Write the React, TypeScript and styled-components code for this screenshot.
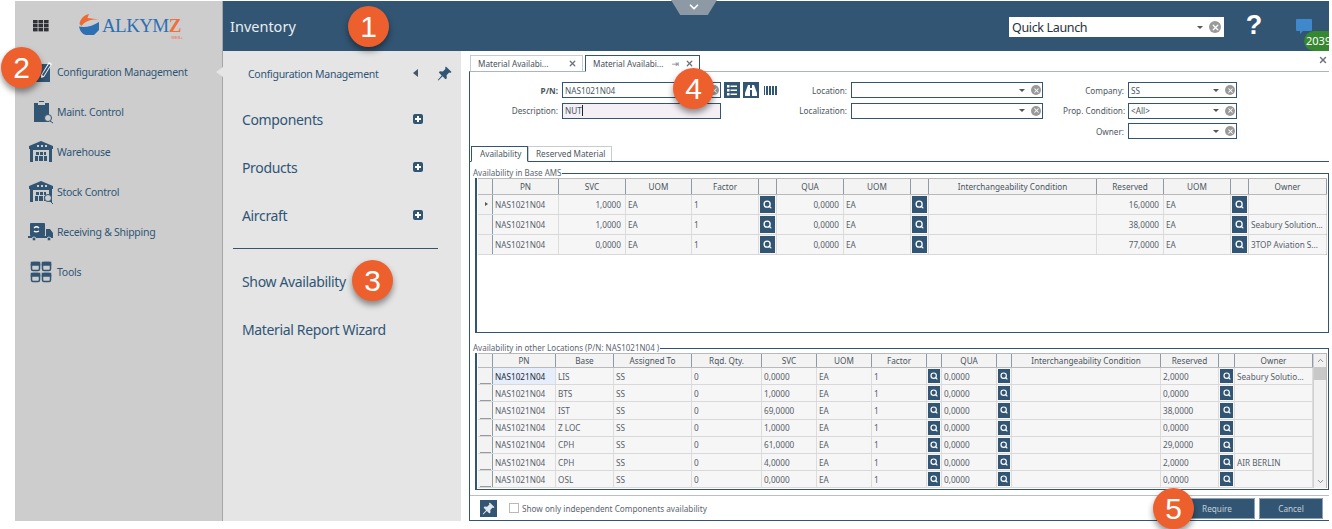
import React from "react";
import styled, { createGlobalStyle } from "styled-components";
import { ChevronDown, ChevronUp, Search, X } from "lucide-react";

const NAVY = "#325573";
const TEXT = "#2f5576";
const FONT = '"Noto Sans", "DejaVu Sans", sans-serif';

const GlobalStyle = createGlobalStyle`
  html, body { margin: 0; padding: 0; background: #fff; }
  body { font-family: ${FONT}; overflow: hidden; }
  * { box-sizing: border-box; }
`;

const Page = styled.div`
  position: relative;
  width: 1332px;
  height: 529px;
  padding: 1px 3px 8px 15px;
  overflow: hidden;
`;

const Shell = styled.div`
  display: flex;
  width: 100%;
  height: 100%;
`;

/* left rail */
const Rail = styled.aside`
  position: relative;
  width: 208px;
  flex: none;
  background: #cdcdcd;
  border-right: 1px solid #a5a5a5;
`;

const RailTop = styled.div`
  display: flex;
  align-items: center;
  height: 50px;
  padding-left: 18px;
  gap: 30px;
`;

const RailList = styled.nav`
  display: flex;
  flex-direction: column;
  padding-top: 1px;
`;

const RailRow = styled.div`
  position: relative;
  display: flex;
  align-items: center;
  height: 40px;
  padding-left: 13px;
  font-size: 10.5px;
  letter-spacing: -0.27px;
  color: ${TEXT};
  svg { width: 26px; height: 24px; flex: none; margin-right: 3px; }
`;

const RailPointer = styled.span`
  position: absolute;
  right: -1px;
  top: 15px;
  width: 7px;
  height: 10px;
  background: #e5e5e5;
  clip-path: polygon(100% 0, 0 50%, 100% 100%);
`;

/* header */
const Column = styled.div`
  flex: 1;
  display: flex;
  flex-direction: column;
  min-width: 0;
`;

const Header = styled.header`
  display: flex;
  align-items: center;
  height: 50px;
  flex: none;
  background: ${NAVY};
  padding-left: 7px;
  color: #fff;
  position: relative;
`;

const HeaderTitle = styled.div`
  font-size: 14.5px;
  color: #e8edf2;
  flex: 1;
  margin-top: -1px;
`;

const QuickLaunch = styled.div`
  display: flex;
  align-items: center;
  width: 215px;
  height: 20px;
  background: #fff;
  color: #26323d;
  font-size: 12.5px;
  letter-spacing: -0.35px;
  padding: 0 3px;
  margin-top: 2px;
  span { flex: 1; }
`;

const Help = styled.div`
  width: 60px;
  margin-left: 0;
  text-align: center;
  font-family: "Liberation Sans", sans-serif;
  font-weight: 700;
  font-size: 27px;
  line-height: 1;
  margin-top: -2px;
`;

const Chat = styled.div`
  position: relative;
  width: 45px;
  height: 50px;
  svg { position: absolute; left: 12px; top: 18px; }
`;

const ChatCount = styled.span`
  position: absolute;
  left: 20px;
  top: 30px;
  width: 25px;
  height: 20px;
  border-radius: 10px 0 0 10px;
  background: #35882f;
  color: #fff;
  font-size: 11px;
  line-height: 20px;
  padding-left: 2px;
  overflow: hidden;
`;

const PullTab = styled.div`
  position: absolute;
  left: 448px;
  top: -1px;
  width: 46px;
  height: 15px;
  background: #8d9aa6;
  clip-path: polygon(0 0, 100% 0, 80% 100%, 20% 100%);
  display: flex;
  justify-content: center;
  color: #fff;
`;

/* second level menu */
const Body = styled.div`
  flex: 1;
  display: flex;
  min-height: 0;
`;

const SubMenu = styled.div`
  width: 238px;
  flex: none;
  background: #e5e5e5;
  color: ${TEXT};
  padding: 0 23px 0 19px;
`;

const SubTitle = styled.div`
  display: flex;
  align-items: center;
  height: 45px;
  margin: 0 -14px -1px 0;
  padding-left: 6px;
  font-size: 10.5px;
  letter-spacing: -0.27px;
  span { flex: 1; }
`;

const Arrow = styled.i`
  width: 0;
  height: 0;
  border-top: 4px solid transparent;
  border-bottom: 4px solid transparent;
  border-right: 5px solid #45586a;
  margin-right: 19px;
  margin-top: -2px;
`;

const SubItem = styled.div`
  display: flex;
  align-items: center;
  justify-content: space-between;
  height: 48px;
  font-size: 14px;
  letter-spacing: -0.35px;
  padding-right: 15px;
  white-space: nowrap;
`;

const PlusBox = styled.span`
  width: 10px;
  height: 10px;
  border-radius: 2px;
  background: ${NAVY};
  position: relative;
  &::before, &::after {
    content: "";
    position: absolute;
    background: #fff;
  }
  &::before { left: 2px; right: 2px; top: 4px; height: 2px; }
  &::after { top: 2px; bottom: 2px; left: 4px; width: 2px; }
`;

const SubDivider = styled.div`
  border-top: 1px solid ${NAVY};
  margin: 9px 0 8px -9px;
`;

/* document area */
const Content = styled.main`
  flex: 1;
  min-width: 0;
  display: flex;
  flex-direction: column;
  background: #fff;
  padding: 4px 0 0 8px;
`;

const DocTabs = styled.div`
  display: flex;
  height: 16px;
  gap: 2px;
  flex: none;
  padding-left: 1px;
  position: relative;
`;

const DocTab = styled.div<{ $active?: boolean }>`
  display: flex;
  align-items: center;
  width: ${(p) => (p.$active ? 115 : 113)}px;
  padding: 0 5px 0 7px;
  font-size: 8.2px;
  color: #47505a;
  background: #fff;
  border: 1px solid ${(p) => (p.$active ? NAVY : "#c5ccd2")};
  border-bottom: ${(p) => (p.$active ? "1px solid #fff" : "none")};
  position: relative;
  z-index: 1;
  height: ${(p) => (p.$active ? 17 : 16)}px;
  span { flex: 1; white-space: nowrap; }
  em { font-style: normal; font-size: 9px; margin-right: 6px; color: #7a8792; }
`;

const DocClose = styled(X)`
  color: #68737d;
`;

const PanelClose = styled(X)`
  position: absolute;
  right: 1px;
  top: 0;
  color: #68737d;
`;

const Doc = styled.div`
  flex: 1;
  min-height: 0;
  display: flex;
  flex-direction: column;
  border: 1px solid ${NAVY};
  border-top: 1px solid #a9b6c1;
  border-right: none;
`;

const FilterBar = styled.div`
  display: flex;
  height: 74px;
  flex: none;
  padding-top: 10px;
`;

const FilterColumn = styled.div<{ $width: number }>`
  width: ${(p) => p.$width}px;
  flex: none;
  display: flex;
  flex-direction: column;
  gap: 4.5px;
`;

const FilterRow = styled.div`
  display: flex;
  align-items: center;
  height: 16px;
`;

const FilterLabel = styled.label<{ $width: number; $strong?: boolean }>`
  width: ${(p) => p.$width}px;
  flex: none;
  text-align: right;
  padding-right: 4px;
  font-size: 8.2px;
  color: #4b5660;
  font-weight: ${(p) => (p.$strong ? 700 : 400)};
  white-space: nowrap;
`;

const Combo = styled.div<{ $width: number; $tint?: boolean }>`
  display: flex;
  align-items: center;
  width: ${(p) => p.$width}px;
  height: 16px;
  flex: none;
  padding: 0 1px 0 2px;
  border: 1px solid ${NAVY};
  background: ${(p) => (p.$tint ? "#f3eff5" : "#fff")};
  font-size: 8.2px;
  color: #4b5660;
  span { flex: 1; }
`;

const TextCursor = styled.i`
  display: inline-block;
  width: 1px;
  height: 11px;
  background: #222;
  vertical-align: -2px;
`;

const Caret = styled.i`
  width: 0;
  height: 0;
  margin-right: 6px;
  border-left: 3px solid transparent;
  border-right: 3px solid transparent;
  border-top: 3px solid #555;
`;

const ClearIcon = styled.b<{ $size?: number }>`
  display: flex;
  align-items: center;
  justify-content: center;
  width: ${(p) => p.$size ?? 10}px;
  height: ${(p) => p.$size ?? 10}px;
  border-radius: 50%;
  background: #9a9a9a;
  color: #fff;
`;

const SquareIcon = styled.span`
  display: flex;
  align-items: center;
  justify-content: center;
  width: 16px;
  height: 16px;
  margin-left: 3px;
  background: ${NAVY};
`;

const Barcode = styled.span`
  width: 14px;
  height: 9px;
  margin-left: 5px;
  background: repeating-linear-gradient(90deg, ${NAVY} 0 1px, #fff 1px 2px, ${NAVY} 2px 3px);
`;

const InnerTabs = styled.div`
  display: flex;
  height: 16px;
  flex: none;
  padding-left: 1px;
  border-bottom: 1px solid ${NAVY};
`;

const InnerTab = styled.div<{ $active?: boolean }>`
  height: ${(p) => (p.$active ? 16 : 15)}px;
  padding: 0 ${(p) => (p.$active ? 8 : 7)}px;
  font-size: 8.2px;
  line-height: 14px;
  color: #4b5660;
  background: #fff;
  border: 1px solid ${(p) => (p.$active ? NAVY : "#c5ccd2")};
  border-bottom: ${(p) => (p.$active ? "1px solid #fff" : "none")};
  width: ${(p) => (p.$active ? 57 : 84)}px;
  white-space: nowrap;
`;

const TabBody = styled.div`
  height: 334px;
  flex: none;
  padding: 6px 0 5px 5px;
  display: flex;
  flex-direction: column;
  gap: 10px;
  border-bottom: 1px solid #b5c0ca;
`;

const Group = styled.fieldset<{ $height: number }>`
  height: ${(p) => p.$height}px;
  flex: none;
  margin: 0;
  padding: 0 1px 1px 1px;
  min-width: 0;
  border: 1px solid ${NAVY};
  border-left-width: 2px;
  legend {
    padding: 0 1px 0 0;
    margin-left: -5px;
    font-size: 8px;
    line-height: 10px;
    height: 10px;
    color: #5b6670;
    white-space: nowrap;
  }
`;

const GridFrame = styled.div`
  display: flex;
  height: 100%;
  border-right: 1px solid #b9b9b9;
`;

const GridBody = styled.div`
  flex: 1;
  min-width: 0;
`;

const GridRow = styled.div<{ $cols: string; $height: number; $head?: boolean }>`
  display: grid;
  grid-template-columns: ${(p) => p.$cols};
  height: ${(p) => p.$height}px;
  background: ${(p) => (p.$head ? "#f3f3f3" : "#f6f6f6")};
  border-bottom: 1px solid ${(p) => (p.$head ? "#b9b9b9" : "#d9d9d9")};
  border-top: ${(p) => (p.$head ? "1px solid #b9b9b9" : "none")};
`;

const HeadCell = styled.div`
  display: flex;
  align-items: center;
  justify-content: center;
  font-size: 8.2px;
  color: #4a535c;
  border-right: 1px solid #8b9cab;
  white-space: nowrap;
  overflow: hidden;
`;

const Cell = styled.div<{ $align?: string; $selected?: boolean }>`
  display: flex;
  align-items: center;
  justify-content: ${(p) => (p.$align === "right" ? "flex-end" : "flex-start")};
  padding: 0 4px 0 2px;
  font-size: 8.2px;
  color: ${(p) => (p.$selected ? "#1f2b36" : "#56606a")};
  background: ${(p) => (p.$selected ? "#e6edfb" : "transparent")};
  border-right: 1px solid #dcdcdc;
  white-space: nowrap;
  overflow: hidden;
`;

const RowHead = styled.div<{ $mark?: boolean; $dash?: boolean }>`
  position: relative;
  background: #f3f3f3;
  border-right: 1px solid #8b9cab;
  ${(p) =>
    p.$mark &&
    `&::after {
      content: "";
      position: absolute;
      left: 7px;
      top: 7px;
      border-left: 3px solid #555;
      border-top: 2.5px solid transparent;
      border-bottom: 2.5px solid transparent;
    }`}
  ${(p) =>
    p.$dash &&
    `&::before {
      content: "";
      position: absolute;
      left: 2px;
      right: 1px;
      bottom: 0;
      height: 1px;
      background: #9a9a9a;
    }`}
`;

const LensCell = styled.div`
  display: flex;
  align-items: stretch;
  justify-content: center;
  padding: 1px;
  background: #f6f6f6;
  border-right: 1px solid #dcdcdc;
`;

const LensButton = styled.span`
  flex: 1;
  display: flex;
  align-items: center;
  justify-content: center;
  background: ${NAVY};
  color: #fff;
`;

const Scrollbar = styled.div`
  width: 13px;
  flex: none;
  display: flex;
  flex-direction: column;
  background: #f1f1f1;
  color: #6a6a6a;
  border-left: 1px solid #d0d0d0;
  border-top: 1px solid #b9b9b9;
`;

const ScrollEnd = styled.div`
  height: 13px;
  display: flex;
  align-items: center;
  justify-content: center;
  flex: none;
`;

const ScrollThumb = styled.div`
  height: 13px;
  background: #c8c8c8;
`;

const ScrollGap = styled.div`
  flex: 1;
`;

const Footer = styled.footer`
  flex: 1;
  display: flex;
  align-items: center;
  padding: 0 6px 0 10px;
  min-height: 0;
`;

const PinButton = styled.span`
  display: flex;
  align-items: center;
  justify-content: center;
  width: 17px;
  height: 17px;
  background: ${NAVY};
`;

const CheckBox = styled.i`
  width: 10px;
  height: 10px;
  margin: 0 3px 0 12px;
  border: 1px solid #b9b9b9;
  background: #fff;
`;

const CheckLabel = styled.span`
  flex: 1;
  font-size: 8.2px;
  color: #5b6670;
`;

const Action = styled.button<{ $width: number; $shift?: number }>`
  width: ${(p) => p.$width}px;
  height: 21px;
  margin-left: 4px;
  border: 1px solid #8fa1b1;
  background: ${NAVY};
  color: #c6d0d9;
  font-family: ${FONT};
  font-size: 8.2px;
  padding: 0 0 0 ${(p) => p.$shift ?? 0}px;
`;

const Bubble = styled.div<{ $x: number; $y: number }>`
  position: absolute;
  left: ${(p) => p.$x}px;
  top: ${(p) => p.$y}px;
  width: 41px;
  height: 41px;
  border-radius: 50%;
  background: #ee5f2e;
  color: #fff;
  font-family: "Liberation Sans", sans-serif;
  font-size: 30px;
  line-height: 41px;
  text-align: center;
  box-shadow: 0 4px 6px rgba(0, 0, 0, 0.42);
  z-index: 5;
`;

/* drawings */
const AppsIcon = () => (
  <svg width="16" height="12" viewBox="0 0 16 12" fill="#2f3338">
    {[0, 4, 8].map((y) =>
      [0, 5.5, 11].map((x) => <rect key={`${x}-${y}`} x={x} y={y} width="4.6" height="3.4" />)
    )}
  </svg>
);

const LogoMark = styled.div`
  display: flex;
  align-items: center;
  font-family: "Liberation Serif", serif;
  color: #2d6fb3;
  font-size: 19px;
  line-height: 15px;
  letter-spacing: -0.6px;
  position: relative;
  margin-top: -1px;
  svg { margin-right: 3px; margin-top: -2px; }
  b { font-weight: 700; color: #f0703a; }
  small {
    position: absolute;
    right: -2px;
    bottom: -5px;
    font-family: "Liberation Sans", sans-serif;
    font-size: 4px;
    line-height: 4px;
    color: #f0703a;
    letter-spacing: 0;
  }
`;

const Logo = () => (
  <LogoMark>
    <svg width="20" height="21" viewBox="0 0 20 21">
      <path d="M0.500 10C1 5 5 1 10 0L8.500 4 20 5.500C13 5 6 6.500 2.500 12Z" fill="#ee6a35" />
      <path d="M0 12.500C6 14 14 12 20 8L20 16 15 21H7C3 20 1 17 0 12.500Z" fill="#2d6fb3" />
    </svg>
    ALKYM<b>Z</b>
    <small>WEB+</small>
  </LogoMark>
);

const ConfigIcon = () => (
  <svg viewBox="0 0 26 24" fill={NAVY}>
    <path d="M5 4h17v18H5z" />
    <path d="M13 15 21 2l3 2-8 13-3 1z" fill="#fff" />
    <path d="M14 15 21 4l1.500 1-7 11z" />
  </svg>
);

const MaintIcon = () => (
  <svg viewBox="0 0 26 24">
    <path d="M6 3h5V1h5v2h5v19H6z" fill={NAVY} />
    <rect x="10" y="2" width="7" height="3" fill="#cdcdcd" />
    <circle cx="20" cy="18" r="3.500" fill="#cdcdcd" stroke={NAVY} />
    <path d="M22 21l3 2" stroke={NAVY} />
  </svg>
);

const WarehouseShape = () => (
  <>
    <path d="M13 1 25 6v3h-1v13H2V9H1V6z" fill={NAVY} />
    <path d="M9 5h2v2H9zm4 0h2v2h-2zm4 0h2v2h-2z" fill="#cdcdcd" />
    <rect x="5" y="10" width="16" height="12" fill="#cdcdcd" />
    <path d="M8 12h3v3H8zm4 0h3v3h-3zm4 0h2v3h-2zM7 16h3v5H7zm4 0h4v5h-4zm5 0h3v5h-3z" fill={NAVY} />
  </>
);

const WarehouseIcon = () => (
  <svg viewBox="0 0 26 24">
    <WarehouseShape />
  </svg>
);

const StockIcon = () => (
  <svg viewBox="0 0 26 24">
    <WarehouseShape />
    <circle cx="20" cy="18" r="3.500" fill="#cdcdcd" stroke={NAVY} />
    <path d="M22 21l3 3" stroke={NAVY} />
  </svg>
);

const TruckIcon = () => (
  <svg viewBox="0 0 26 24">
    <rect x="2" y="3" width="15" height="13" rx="1" fill={NAVY} />
    <path d="M6 8c2-2 4-1 5 0M11 11c-2 1-4 1-5 0" stroke="#fff" strokeWidth="1.200" fill="none" />
    <path d="M18 9h4l3 4v5h-7z" fill={NAVY} />
    <rect x="0" y="16" width="25" height="2" fill={NAVY} />
    <circle cx="6" cy="19" r="2" fill={NAVY} stroke="#cdcdcd" />
    <circle cx="21" cy="19" r="2" fill={NAVY} stroke="#cdcdcd" />
  </svg>
);

const ToolsIcon = () => (
  <svg viewBox="0 0 26 24" fill="none" stroke={NAVY} strokeWidth="1.500">
    {[
      [3.500, 2.500],
      [14.500, 2.500],
      [3.500, 13.500],
      [14.500, 13.500],
    ].map(([x, y]) => (
      <g key={`${x}-${y}`}>
        <rect x={x} y={y} width="8" height="8" rx="1.500" />
        <rect x={x} y={y} width="8" height="2.500" fill={NAVY} />
      </g>
    ))}
  </svg>
);

const PinIcon = ({ size, color }: { size: number; color: string }) => (
  <svg width={size} height={size} viewBox="0 0 16 16" fill={color}>
    <path d="M9.500 0.500 15.500 6.500 14 7.500 13 6.800 10.200 9.800 10.500 13 9 14 6 11 1.500 15.500 0.800 14.800 5 10 2 7 3 5.500 6.200 5.800 9.200 3 8.500 2z" />
  </svg>
);

const ListIcon = () => (
  <svg width="10" height="11" viewBox="0 0 10 11" fill="#fff">
    {[0, 4, 8].map((y) => (
      <g key={y}>
        <rect x="0" y={y} width="2.500" height="2.500" />
        <rect x="3.500" y={y + 0.500} width="6.500" height="1.500" />
      </g>
    ))}
  </svg>
);

const BinocularsIcon = () => (
  <svg width="12" height="11" viewBox="0 0 12 11" fill="#fff">
    <path d="M3 0h2v3h2V0h2l3 8v3H7V5H5v6H0V8z" />
  </svg>
);

const Lens = ({ size }: { size: number }) => <Search size={size} strokeWidth={3.5} color="#fff" />;

const Clear = ({ size }: { size?: number }) => (
  <ClearIcon $size={size}>
    <X size={(size ?? 10) - 3} strokeWidth={3.5} />
  </ClearIcon>
);

/* data */
type ColumnDef = { title: string; width: number; kind?: "lens" | "row"; align?: string };

const stockColumns: ColumnDef[] = [
  { title: "", width: 15, kind: "row" },
  { title: "PN", width: 66 },
  { title: "SVC", width: 67, align: "right" },
  { title: "UOM", width: 66 },
  { title: "Factor", width: 67 },
  { title: "", width: 18, kind: "lens" },
  { title: "QUA", width: 67, align: "right" },
  { title: "UOM", width: 67 },
  { title: "", width: 18, kind: "lens" },
  { title: "Interchangeability Condition", width: 168 },
  { title: "Reserved", width: 67, align: "right" },
  { title: "UOM", width: 67 },
  { title: "", width: 18, kind: "lens" },
  { title: "Owner", width: 78 },
];

const stockRows = [
  ["", "NAS1021N04", "1,0000", "EA", "1", "", "0,0000", "EA", "", "", "16,0000", "EA", "", ""],
  ["", "NAS1021N04", "1,0000", "EA", "1", "", "0,0000", "EA", "", "", "38,0000", "EA", "", "Seabury Solution..."],
  ["", "NAS1021N04", "0,0000", "EA", "1", "", "0,0000", "EA", "", "", "77,0000", "EA", "", "3TOP Aviation S..."],
];

const otherColumns: ColumnDef[] = [
  { title: "", width: 15, kind: "row" },
  { title: "PN", width: 63 },
  { title: "Base", width: 58 },
  { title: "Assigned To", width: 78 },
  { title: "Rqd. Qty.", width: 70 },
  { title: "SVC", width: 55 },
  { title: "UOM", width: 55 },
  { title: "Factor", width: 55 },
  { title: "", width: 15, kind: "lens" },
  { title: "QUA", width: 55 },
  { title: "", width: 15, kind: "lens" },
  { title: "Interchangeability Condition", width: 149 },
  { title: "Reserved", width: 58 },
  { title: "", width: 16, kind: "lens" },
  { title: "Owner", width: 78 },
];

const otherRow = (base: string, svc: string, reserved: string, owner = "") => [
  "", "NAS1021N04", base, "SS", "0", svc, "EA", "1", "", "0,0000", "", "", reserved, "", owner,
];

const otherRows = [
  otherRow("LIS", "0,0000", "2,0000", "Seabury Solutio..."),
  otherRow("BTS", "1,0000", "0,0000"),
  otherRow("IST", "69,0000", "38,0000"),
  otherRow("Z LOC", "1,0000", "0,0000"),
  otherRow("CPH", "61,0000", "29,0000"),
  otherRow("CPH", "4,0000", "2,0000", "AIR BERLIN"),
  otherRow("OSL", "0,0000", "0,0000"),
];

const railItems = [
  { label: "Configuration Management", icon: <ConfigIcon />, pointer: true },
  { label: "Maint. Control", icon: <MaintIcon /> },
  { label: "Warehouse", icon: <WarehouseIcon /> },
  { label: "Stock Control", icon: <StockIcon /> },
  { label: "Receiving & Shipping", icon: <TruckIcon /> },
  { label: "Tools", icon: <ToolsIcon /> },
];

const DataGrid = ({
  columns,
  rows,
  rowHeight,
  headHeight,
  lens,
  selectFirst,
}: {
  columns: ColumnDef[];
  rows: string[][];
  rowHeight: number;
  headHeight: number;
  lens: number;
  selectFirst?: boolean;
}) => {
  const cols = columns.map((c) => `${c.width}px`).join(" ");
  return (
    <GridBody>
      <GridRow $cols={cols} $height={headHeight} $head>
        {columns.map((c, i) => (
          <HeadCell key={i}>{c.title}</HeadCell>
        ))}
      </GridRow>
      {rows.map((row, r) => (
        <GridRow key={r} $cols={cols} $height={rowHeight}>
          {columns.map((c, i) => {
            if (c.kind === "row") return <RowHead key={i} $mark={!selectFirst && r === 0} $dash={selectFirst} />;
            if (c.kind === "lens")
              return (
                <LensCell key={i}>
                  <LensButton>
                    <Lens size={lens} />
                  </LensButton>
                </LensCell>
              );
            return (
              <Cell key={i} $align={c.align} $selected={selectFirst && r === 0 && i === 1}>
                {row[i]}
              </Cell>
            );
          })}
        </GridRow>
      ))}
    </GridBody>
  );
};

const ComboField = ({ label, labelWidth, value, width }: { label: string; labelWidth: number; value?: string; width: number }) => (
  <FilterRow>
    <FilterLabel $width={labelWidth}>{label}</FilterLabel>
    <Combo $width={width}>
      <span>{value}</span>
      <Caret />
      <Clear />
    </Combo>
  </FilterRow>
);

export default function App() {
  return (
    <Page>
      <GlobalStyle />
      <Shell>
        <Rail>
          <RailTop>
            <AppsIcon />
            <Logo />
          </RailTop>
          <RailList>
            {railItems.map((item) => (
              <RailRow key={item.label}>
                {item.icon}
                {item.label}
                {item.pointer && <RailPointer />}
              </RailRow>
            ))}
          </RailList>
        </Rail>
        <Column>
          <Header>
            <HeaderTitle>Inventory</HeaderTitle>
            <PullTab>
              <ChevronDown size={14} strokeWidth={3} />
            </PullTab>
            <QuickLaunch>
              <span>Quick Launch</span>
              <Caret />
              <Clear size={12} />
            </QuickLaunch>
            <Help>?</Help>
            <Chat>
              <svg width="16" height="15" viewBox="0 0 16 15" fill="#3f88cc">
                <path d="M1 0h14a1 1 0 0 1 1 1v10a1 1 0 0 1-1 1H7l-3 3v-3H1a1 1 0 0 1-1-1V1a1 1 0 0 1 1-1z" />
              </svg>
              <ChatCount>2039</ChatCount>
            </Chat>
          </Header>
          <Body>
            <SubMenu>
              <SubTitle>
                <span>Configuration Management</span>
                <Arrow />
                <PinIcon size={15} color={NAVY} />
              </SubTitle>
              <SubItem>
                Components
                <PlusBox />
              </SubItem>
              <SubItem>
                Products
                <PlusBox />
              </SubItem>
              <SubItem>
                Aircraft
                <PlusBox />
              </SubItem>
              <SubDivider />
              <SubItem>Show Availability</SubItem>
              <SubItem>Material Report Wizard</SubItem>
            </SubMenu>
            <Content>
              <DocTabs>
                <DocTab>
                  <span>Material Availabi...</span>
                  <DocClose size={9} strokeWidth={3.5} />
                </DocTab>
                <DocTab $active>
                  <span>Material Availabi...</span>
                  <em>⇥</em>
                  <DocClose size={9} strokeWidth={3.5} />
                </DocTab>
                <PanelClose size={10} strokeWidth={3.5} />
              </DocTabs>
              <Doc>
                <FilterBar>
                  <FilterColumn $width={316}>
                    <FilterRow>
                      <FilterLabel $width={92} $strong>
                        P/N:
                      </FilterLabel>
                      <Combo $width={159}>
                        <span>NAS1021N04</span>
                        <Clear />
                      </Combo>
                      <SquareIcon>
                        <ListIcon />
                      </SquareIcon>
                      <SquareIcon>
                        <BinocularsIcon />
                      </SquareIcon>
                      <Barcode />
                    </FilterRow>
                    <FilterRow>
                      <FilterLabel $width={92}>Description:</FilterLabel>
                      <Combo $width={159} $tint>
                        <span>
                          NUT
                          <TextCursor />
                        </span>
                      </Combo>
                    </FilterRow>
                  </FilterColumn>
                  <FilterColumn $width={277}>
                    <ComboField label="Location:" labelWidth={65} width={192} />
                    <ComboField label="Localization:" labelWidth={65} width={192} />
                  </FilterColumn>
                  <FilterColumn $width={250}>
                    <ComboField label="Company:" labelWidth={65} value="SS" width={109} />
                    <ComboField label="Prop. Condition:" labelWidth={65} value="<All>" width={109} />
                    <ComboField label="Owner:" labelWidth={65} width={109} />
                  </FilterColumn>
                </FilterBar>
                <InnerTabs>
                  <InnerTab $active>Availability</InnerTab>
                  <InnerTab>Reserved Material</InnerTab>
                </InnerTabs>
                <TabBody>
                  <Group $height={165}>
                    <legend>Availability in Base AMS</legend>
                    <GridFrame>
                      <DataGrid columns={stockColumns} rows={stockRows} rowHeight={20} headHeight={17} lens={9} />
                    </GridFrame>
                  </Group>
                  <Group $height={147}>
                    <legend>Availability in other Locations (P/N: NAS1021N04 )</legend>
                    <GridFrame>
                      <DataGrid
                        columns={otherColumns}
                        rows={otherRows}
                        rowHeight={17.2}
                        headHeight={15}
                        lens={8}
                        selectFirst
                      />
                      <Scrollbar>
                        <ScrollEnd>
                          <ChevronUp size={9} />
                        </ScrollEnd>
                        <ScrollThumb />
                        <ScrollGap />
                        <ScrollEnd>
                          <ChevronDown size={9} />
                        </ScrollEnd>
                      </Scrollbar>
                    </GridFrame>
                  </Group>
                </TabBody>
                <Footer>
                  <PinButton>
                    <PinIcon size={13} color="#dfe6ec" />
                  </PinButton>
                  <CheckBox />
                  <CheckLabel>Show only independent Components availability</CheckLabel>
                  <Action $width={83} $shift={7}>
                    Require
                  </Action>
                  <Action $width={64}>Cancel</Action>
                </Footer>
              </Doc>
            </Content>
          </Body>
        </Column>
      </Shell>
      <Bubble $x={348} $y={6}>1</Bubble>
      <Bubble $x={1} $y={47}>2</Bubble>
      <Bubble $x={352} $y={260}>3</Bubble>
      <Bubble $x={673} $y={68}>4</Bubble>
      <Bubble $x={1153} $y={488}>5</Bubble>
    </Page>
  );
}
